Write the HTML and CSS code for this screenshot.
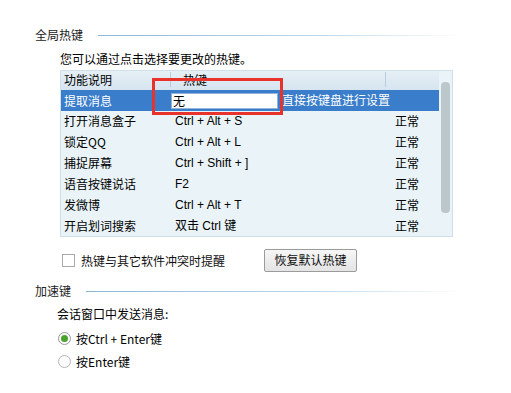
FILE: index.html
```html
<!DOCTYPE html>
<html lang="zh-CN">
<head>
    <meta charset="UTF-8">
    <title>热键设置</title>
    <link rel="stylesheet" href="styles.css">
</head>
<body>
    <div class="page">
        <div class="section-head">
            <span class="section-title">全局热键</span>
            <span class="rule"></span>
        </div>
        <div class="section-body">
            <p class="hint">您可以通过点击选择要更改的热键。</p>
            <div class="hotkey-list">
                <div class="list-main">
                    <div class="list-head">
                        <div class="col-name">功能说明</div>
                        <div class="col-key">热键</div>
                        <div class="col-state"></div>
                    </div>
                    <div class="row selected">
                        <div class="col-name">提取消息</div>
                        <div class="col-edit">
                            <span class="key-input">无</span>
                            <span class="edit-tip">直接按键盘进行设置</span>
                        </div>
                    </div>
                    <div class="row">
                        <div class="col-name">打开消息盒子</div>
                        <div class="col-key">Ctrl + Alt + S</div>
                        <div class="col-state">正常</div>
                    </div>
                    <div class="row">
                        <div class="col-name">锁定QQ</div>
                        <div class="col-key">Ctrl + Alt + L</div>
                        <div class="col-state">正常</div>
                    </div>
                    <div class="row">
                        <div class="col-name">捕捉屏幕</div>
                        <div class="col-key">Ctrl + Shift + ]</div>
                        <div class="col-state">正常</div>
                    </div>
                    <div class="row">
                        <div class="col-name">语音按键说话</div>
                        <div class="col-key">F2</div>
                        <div class="col-state">正常</div>
                    </div>
                    <div class="row">
                        <div class="col-name">发微博</div>
                        <div class="col-key">Ctrl + Alt + T</div>
                        <div class="col-state">正常</div>
                    </div>
                    <div class="row">
                        <div class="col-name">开启划词搜索</div>
                        <div class="col-key">双击 Ctrl 键</div>
                        <div class="col-state">正常</div>
                    </div>
                </div>
                <div class="scrollbar"><div class="thumb"></div></div>
                <div class="mark"></div>
            </div>
            <div class="options">
                <label class="check">
                    <span class="box"></span>
                    热键与其它软件冲突时提醒
                </label>
                <button type="button" class="btn">恢复默认热键</button>
            </div>
        </div>

        <div class="section-head second">
            <span class="section-title">加速键</span>
            <span class="rule"></span>
        </div>
        <div class="section-body send">
            <p class="send-label">会话窗口中发送消息:</p>
            <label class="radio">
                <span class="dot on"></span>
                按Ctrl + Enter键
            </label>
            <label class="radio">
                <span class="dot"></span>
                按Enter键
            </label>
        </div>
    </div>
</body>
</html>
```

FILE: styles.css
```css
body {
    margin: 0;
    background-color: #fff;
    color: #000;
    font-family: "Noto Sans CJK SC", "Noto Sans", sans-serif;
    font-size: 12px;
    line-height: 16px;
}
.page {
    width: 476px;
    padding: 27px 0 0 35px;
}
.section-head {
    display: flex;
    align-items: center;
    height: 16px;
}
.section-head.second {
    margin-top: 11px;
}
.section-title {
    color: #222;
    margin-right: 15px;
}
.rule {
    flex: 1;
    height: 1px;
    margin-right: 48px;
    background: linear-gradient(to right, #8ab7da, #bcd6ea 60%, #ffffff);
}
.section-body {
    padding-left: 25px;
}
.hint {
    margin: 8px 0 3px 0;
}
.hotkey-list {
    position: relative;
    display: flex;
    width: 391px;
    height: 165px;
    border: 1px solid #cfe0ea;
    background-color: #eaf4f8;
}
.list-main {
    flex: 1;
}
.list-head, .row {
    display: flex;
    align-items: center;
    box-sizing: border-box;
    padding-bottom: 2px;
}
.list-head {
    height: 19px;
    background: linear-gradient(#e6eff6, #d6e5f0);
}
.row {
    height: 21px;
}
.col-name {
    width: 106px;
    padding-left: 3px;
}
.col-key {
    width: 205px;
    padding-left: 5px;
    font-family: "Liberation Sans", "Noto Sans CJK SC", sans-serif;
}
.list-head .col-key, .list-head .col-state {
    height: 15px;
    line-height: 15px;
    border-left: 1px solid #b9cedd;
    font-family: "Noto Sans CJK SC", sans-serif;
}
.list-head .col-key {
    padding-left: 12px;
    width: 202px;
}
.col-state {
    flex: 1;
    padding-left: 15px;
}
.row.selected {
    background-color: #3a7dca;
    color: #fff;
    padding-bottom: 0;
}
.col-edit {
    display: flex;
    align-items: center;
}
.key-input {
    width: 104px;
    height: 14px;
    line-height: 13px;
    margin-left: 1px;
    padding-left: 1px;
    background-color: #fff;
    border: 1px solid #8fb3d9;
    color: #000;
}
.edit-tip {
    margin-left: 4px;
    margin-bottom: 2px;
}
.scrollbar {
    width: 13px;
    padding-top: 11px;
}
.thumb {
    width: 9px;
    height: 131px;
    margin-left: 2px;
    border-radius: 4px;
    background-color: #bcc7cb;
}
.mark {
    position: absolute;
    left: 91px;
    top: 7px;
    width: 125px;
    height: 31px;
    border: 3px solid #e8322c;
}
.options {
    display: flex;
    align-items: center;
    height: 23px;
    margin-top: 12px;
}
.check {
    display: flex;
    align-items: center;
    width: 202px;
    padding-left: 2px;
    color: #111;
}
.box {
    width: 11px;
    height: 11px;
    margin-right: 6px;
    border: 1px solid #a9a9a9;
    background-color: #fff;
}
.btn {
    width: 93px;
    height: 23px;
    padding: 0 0 2px 0;
    border: 1px solid #9b9b9b;
    border-radius: 2px;
    background: linear-gradient(#f6f6f6, #e4e4e4);
    font-family: "Noto Sans CJK SC", sans-serif;
    font-size: 12px;
    color: #111;
}
.send {
    padding-left: 22px;
}
.send-label {
    margin: 7px 0 5px 0;
}
.radio {
    display: flex;
    align-items: center;
    height: 23px;
}
.dot {
    position: relative;
    width: 11px;
    height: 11px;
    margin: 0 5px 0 1px;
    border: 1px solid #b8b8b8;
    border-radius: 50%;
    background-color: #fbfbfb;
}
.dot.on {
    border-color: #9a9a9a;
}
.dot.on::after {
    content: "";
    position: absolute;
    left: 2px;
    top: 2px;
    width: 7px;
    height: 7px;
    border-radius: 50%;
    background-color: #4aa32c;
}
```
